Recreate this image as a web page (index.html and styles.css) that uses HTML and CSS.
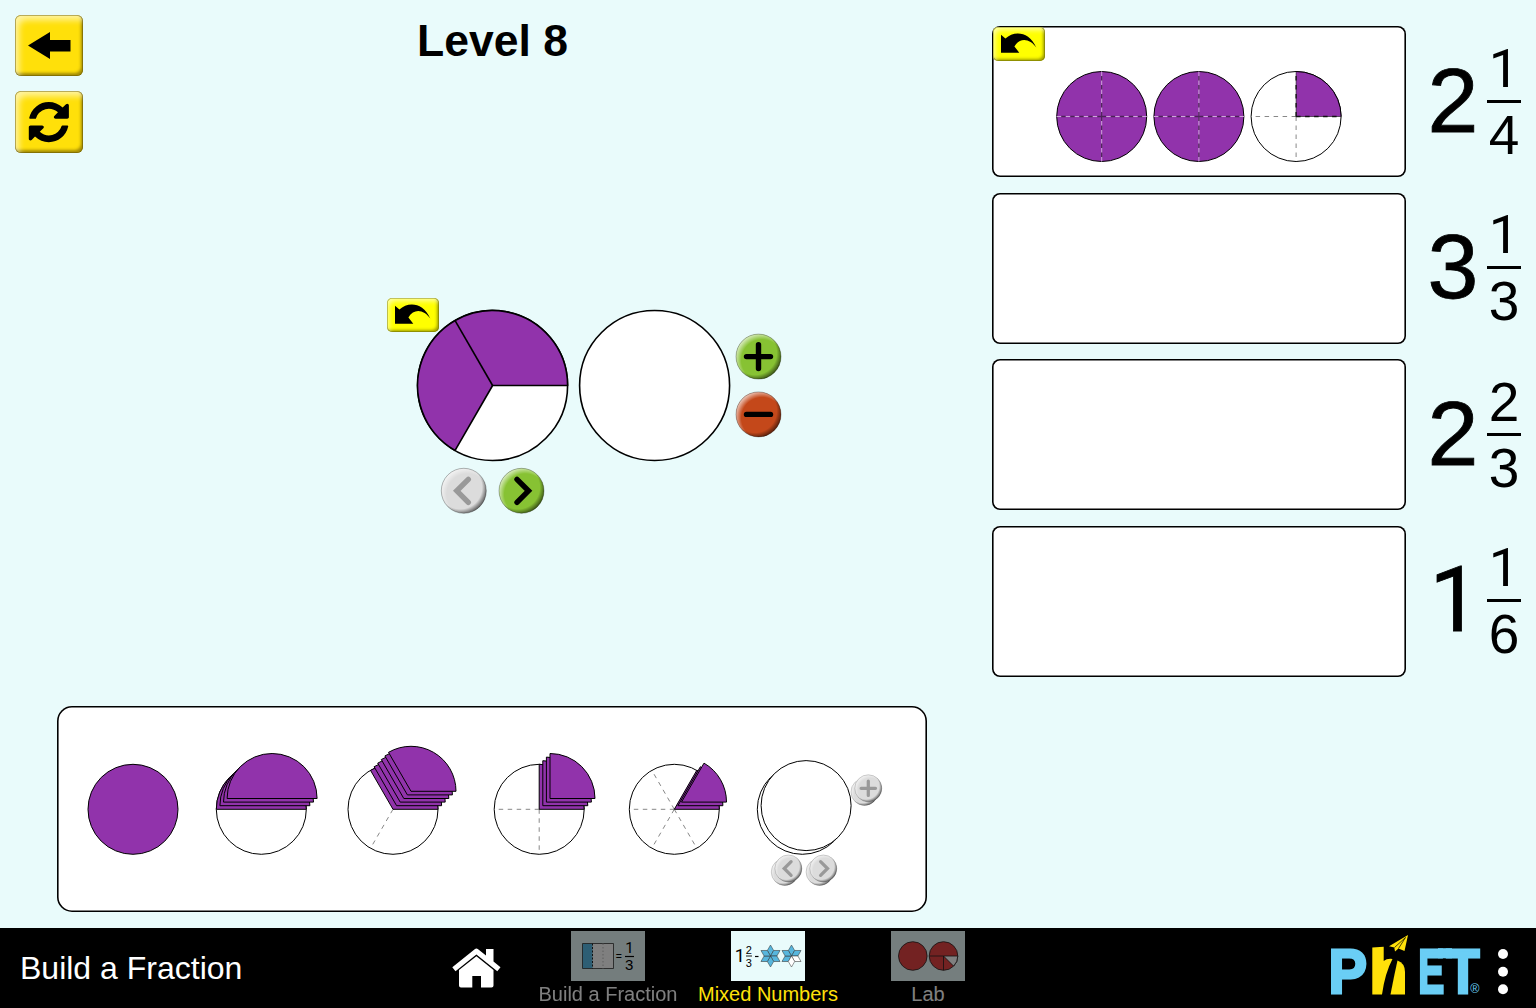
FILE: index.html
```html
<!DOCTYPE html>
<html lang="en">
<head>
<meta charset="utf-8">
<title>Build a Fraction</title>
<link rel="stylesheet" href="styles.css">
</head>
<body>
<svg class="defs" width="0" height="0" aria-hidden="true">
  <defs>
    <radialGradient id="shine" cx=".58" cy=".58" r=".62"><stop offset=".74" stop-color="#fff" stop-opacity="0"/><stop offset="1" stop-color="#fff" stop-opacity=".75"/></radialGradient>
    <radialGradient id="shade" cx=".42" cy=".42" r=".62"><stop offset=".78" stop-color="#000" stop-opacity="0"/><stop offset="1" stop-color="#000" stop-opacity=".62"/></radialGradient>
    <g id="ball"><circle r="22.5"/><circle r="22.5" fill="url(#shine)"/><circle r="22.5" fill="url(#shade)" stroke="#000" stroke-opacity=".4" stroke-width=".7"/></g>
    <path id="chevron" d="M4.5 -11.5L-7 0L4.5 11.5" fill="none" stroke-width="5.4" stroke-linecap="round"/>
    <path id="plus" d="M-12 0H12M0 -12V12" fill="none" stroke-width="5.4" stroke-linecap="round"/>
    <path id="half" d="M-45 0A45 45 0 0 1 45 0Z"/>
    <path id="third" d="M0 0H45A45 45 0 0 0 -22.5 -38.97Z"/>
    <path id="quarter" d="M0 0H45A45 45 0 0 0 0 -45Z"/>
    <path id="sixth" d="M0 0H45A45 45 0 0 0 22.5 -38.97Z"/>
    <path id="undo" d="M8 7.8L12.4 11.6C21 3.5 36 4 43.4 20.8C37 11.5 27 10 21.4 19.5L26.3 25.7H8Z"/>
    <g id="fourths-full"><circle r="45" class="piece"/><path d="M-45 0H45M0 -45V45" stroke="#cda6d9"/><path d="M0 0H41M0 0H-41M0 0V41M0 0V-41" stroke="#4d2159" stroke-width="1.3" stroke-dasharray="4.5 4.5"/></g>
  </defs>
</svg>

<main class="screen">
  <section class="play">
    <header class="top">
      <div class="tools">
        <button class="key" aria-label="Back"><svg width="68" height="61"><path d="M13 30.5L35 17V25H55.5V36.5H35V44Z"/></svg></button>
        <button class="key" aria-label="Refresh"><svg width="68" height="62"><g transform="translate(13.8 7.7) scale(.0261)"><path d="M1511 1056q0 5-1 7-64 268-268 434.500t-478 166.500q-146 0-282.500-55t-243.500-157l-129 129q-19 19-45 19t-45-19-19-45v-448q0-26 19-45t45-19h448q26 0 45 19t19 45-19 45l-137 137q71 66 161 102t187 36q134 0 250-65t186-179q11-17 53-117 8-23 30-23h192q13 0 22.500 9.500t9.500 22.500zm25-800v448q0 26-19 45t-45 19h-448q-26 0-45-19t-19-45 19-45l138-138q-148-137-349-137-134 0-250 65t-186 179q-11 17-53 117-8 23-30 23h-199q-13 0-22.500-9.500t-9.500-22.500v-7q65-268 270-434.500t480-166.500q146 0 284 55.500t245 156.500l130-129q19-19 45-19t45 19 19 45z"/></g></svg></button>
      </div>
      <h1 class="level">Level 8</h1>
    </header>

    <div class="workspace">
      <svg class="build" width="410" height="230" viewBox="382 290 410 230">
        <g class="outline">
          <circle cx="492.600" cy="385.500" r="75"/>
          <circle cx="654.600" cy="385.500" r="75"/>
          <path class="fill" d="M492.600 385.500H567.600A75 75 0 1 0 455.100 450.450Z"/>
          <path d="M492.600 385.500L455.100 320.550"/>
        </g>
        <g transform="translate(758.500 356.600)" class="green"><use href="#ball"/><use href="#plus" class="ink"/></g>
        <g transform="translate(758.500 414.400)" class="rust"><use href="#ball"/><path class="ink" d="M-12 0H12" stroke-width="5.400" stroke-linecap="round"/></g>
        <g transform="translate(463.800 490.800)" class="gray"><use href="#ball"/><use href="#chevron" class="dim"/></g>
        <g transform="translate(521.500 490.800)" class="green"><use href="#ball"/><use href="#chevron" class="ink" transform="scale(-1 1)"/></g>
      </svg>
      <button class="key undo build-undo" aria-label="Undo"><svg width="52" height="34"><use href="#undo"/></svg></button>
    </div>

    <div class="tray">
      <svg width="120" height="150" viewBox="-53 -69.300 120 150"><circle r="45" class="piece"/></svg>
      <svg width="130" height="150" viewBox="-61.300 -69.300 130 150">
        <circle r="45" class="hollow"/>
        <g class="piece"><use href="#half"/><use href="#half" x="3.600" y="-3.600"/><use href="#half" x="7.200" y="-7.200"/><use href="#half" x="10.800" y="-10.800"/></g>
      </svg>
      <svg width="145" height="150" viewBox="-63 -69.300 145 150">
        <circle r="45" class="hollow"/><path class="dash" d="M0 0L-20.500 35.500"/>
        <g class="piece"><use href="#third"/><use href="#third" x="3.600" y="-3.600"/><use href="#third" x="7.200" y="-7.200"/><use href="#third" x="10.800" y="-10.800"/><use href="#third" x="14.400" y="-14.400"/><use href="#third" x="18" y="-18"/></g>
      </svg>
      <svg width="137" height="150" viewBox="-64.200 -69.300 137 150">
        <circle r="45" class="hollow"/><path class="dash" d="M0 0H-41M0 0V41"/>
        <g class="piece"><use href="#quarter"/><use href="#quarter" x="3.600" y="-3.600"/><use href="#quarter" x="7.200" y="-7.200"/><use href="#quarter" x="10.800" y="-10.800"/></g>
      </svg>
      <svg width="130" height="150" viewBox="-62.300 -69.300 130 150">
        <circle r="45" class="hollow"/><path class="dash" d="M0 0H-41M0 0L-20.500 -35.500M0 0L-20.500 35.500M0 0L20.500 35.500"/>
        <g class="piece"><use href="#sixth"/><use href="#sixth" x="3.600" y="-3.600"/><use href="#sixth" x="7.200" y="-7.200"/></g>
      </svg>
      <svg width="158" height="150" viewBox="-60.300 -69.300 158 150">
        <circle r="45" class="hollow"/><circle r="45" cx="3.800" cy="-3.700" class="hollow"/>
        <g class="gray">
          <use href="#ball" transform="translate(62.200 -17.400) scale(.6)"/>
          <g transform="translate(66 -21) scale(.6)"><use href="#ball"/><use href="#plus" class="dim"/></g>
          <use href="#ball" transform="translate(-17.500 62.700) scale(.6)"/>
          <g transform="translate(-13.900 59.200) scale(.6)"><use href="#ball"/><use href="#chevron" class="dim"/></g>
          <use href="#ball" transform="translate(17.300 62.700) scale(.6)"/>
          <g transform="translate(21 59.200) scale(.6)"><use href="#ball"/><use href="#chevron" class="dim" transform="scale(-1 1)"/></g>
        </g>
      </svg>
    </div>
  </section>

  <section class="goals">
    <div class="goal">
      <div class="slot">
        <button class="key undo" aria-label="Undo"><svg width="52" height="34"><use href="#undo"/></svg></button>
        <svg class="answer" width="290" height="94" viewBox="-46.700 -46.500 290 94">
          <use href="#fourths-full"/>
          <use href="#fourths-full" x="97.200"/>
          <g transform="translate(194.400 0)"><circle r="45" class="hollow"/><path class="dash" d="M0 0H-41M0 0V41"/><path class="fill" d="M0 0H45A45 45 0 0 0 0 -45Z"/><path d="M45 0A45 45 0 0 0 0 -45" fill="none" stroke="#000"/><path d="M0 -45V0H45" fill="none" stroke="#000" stroke-opacity=".55"/><path d="M0 0H41M0 0V-41" stroke="#111" stroke-dasharray="4.500 4.500" stroke-width="1.300"/></g>
        </svg>
      </div>
      <div class="mixed"><span class="whole">2</span><span class="frac"><span class="one">1</span><i class="bar"></i><span>4</span></span></div>
    </div>
    <div class="goal">
      <div class="slot"></div>
      <div class="mixed"><span class="whole">3</span><span class="frac"><span class="one">1</span><i class="bar"></i><span>3</span></span></div>
    </div>
    <div class="goal">
      <div class="slot"></div>
      <div class="mixed"><span class="whole">2</span><span class="frac"><span>2</span><i class="bar"></i><span>3</span></span></div>
    </div>
    <div class="goal">
      <div class="slot"></div>
      <div class="mixed"><span class="whole one">1</span><span class="frac"><span class="one">1</span><i class="bar"></i><span>6</span></span></div>
    </div>
  </section>
</main>

<footer class="navbar">
  <div class="sim-title">Build a Fraction</div>
  <svg class="home" width="50" height="42" viewBox="451 947 50 42" fill="#fff">
    <path d="M452.300 967.200L474.700 949.200Q476.400 948 478.100 949.200L486 955.600V949H493.500V961.600L500.500 967.200L497.300 971.200L476.400 954.400L455.500 971.200Z"/>
    <path d="M476.400 956.200L493.500 970V985.500Q493.500 987.500 491.500 987.500H481V976H472.300V987.500H461Q459 987.500 459 985.500V970Z"/>
  </svg>
  <nav class="tabs">
    <a class="tab">
      <svg class="thumb" width="74" height="50">
        <rect x="11.500" y="12.500" width="31" height="25" fill="#fff"/><rect x="11.500" y="12.500" width="10" height="25" fill="#5bbde8"/>
        <path d="M11.500 12.500H42.500V37.500H11.500Z" fill="none" stroke="#333" stroke-width=".8"/><path d="M21.500 12.500V37.500" stroke="#222" stroke-dasharray="2 1.500"/><path d="M32 12.500V37.500" stroke="#bbb" stroke-dasharray="1.500 2"/>
        <text x="44.700" y="29" font-size="10.500">=</text><text class="one-face" x="54.300" y="22.300" font-size="15">1</text><path d="M54 25.500H63" stroke="#000" stroke-width="1.200"/><text x="54" y="38.500" font-size="15">3</text>
      </svg>
      <span>Build a Fraction</span>
    </a>
    <a class="tab active">
      <svg class="thumb" width="74" height="50">
        <defs><path id="petal" d="M0 0L-3.200 -5.500L0 -11L3.200 -5.500Z"/></defs>
        <text class="one-face" x="3.800" y="31" font-size="18">1</text><text x="14.800" y="22.500" font-size="11">2</text><path d="M15 25H21" stroke="#000" stroke-width=".9"/><text x="14.800" y="35.500" font-size="11">3</text>
        <path d="M24 25.500H27.500" stroke="#000" stroke-width="1.200"/>
        <g stroke="#333" stroke-width=".5" fill="#57b6dd">
          <g transform="translate(39.500 25)"><use href="#petal"/><use href="#petal" transform="rotate(60)"/><use href="#petal" transform="rotate(120)"/><use href="#petal" transform="rotate(180)"/><use href="#petal" transform="rotate(240)"/><use href="#petal" transform="rotate(300)"/></g>
          <g transform="translate(60.500 25)"><use href="#petal"/><use href="#petal" transform="rotate(60)"/><use href="#petal" transform="rotate(240)"/><use href="#petal" transform="rotate(300)"/><g fill="#fff"><use href="#petal" transform="rotate(120)"/><use href="#petal" transform="rotate(180)"/></g></g>
        </g>
      </svg>
      <span>Mixed Numbers</span>
    </a>
    <a class="tab">
      <svg class="thumb" width="74" height="50">
        <g fill="#e64545" stroke="#222" stroke-width=".8"><circle cx="21.800" cy="25" r="14.300"/><circle cx="52.500" cy="25" r="14.300"/><path d="M52.500 25H66.800A14.300 14.300 0 0 1 62.600 35.100Z" fill="#fff"/><path d="M38.200 25H52.500V39.300" fill="none"/></g>
      </svg>
      <span>Lab</span>
    </a>
  </nav>
  <svg class="logo" width="158" height="76" viewBox="1328 932 158 76">
    <g class="brand"><text x="1328.500" y="993" textLength="38.500" lengthAdjust="spacingAndGlyphs">P</text><text x="1418.300" y="993" textLength="26" lengthAdjust="spacingAndGlyphs">E</text><text x="1446.500" y="993" textLength="33" lengthAdjust="spacingAndGlyphs">T</text></g>
    <path d="M1438 948.200H1452V958.300H1438Z" fill="#6acef5"/>
    <g fill="#ffe10a">
      <path d="M1372.300 947.500L1383.700 946.800V961Q1387 958.300 1392.500 959Q1385 973 1382 994.500H1372.300Z"/>
      <path d="M1397.500 960.500Q1404.800 963 1405 972V994.500H1390.500Q1394 976 1397.500 960.500Z"/>
      <path d="M1389 946.200L1408 935L1404.500 951L1398.500 948.500L1395 951.500L1394.300 947.500Z"/>
    </g>
    <path d="M1394.500 947.500L1405.500 937.500L1398.500 948.500" fill="none" stroke="#000" stroke-width=".7"/>
    <text class="reg" x="1470.300" y="993">®</text>
  </svg>
  <svg class="menu" width="12" height="48" fill="#fff"><circle cx="6" cy="6" r="5"/><circle cx="6" cy="23.700" r="5"/><circle cx="6" cy="41.200" r="5"/></svg>
</footer>
</body>
</html>
```

FILE: styles.css
```css
* { box-sizing: border-box; }
body {
  margin: 0;
  width: 1536px;
  height: 1008px;
  overflow: hidden;
  background: #e9fbfb;
  color: #000;
  font-family: "Liberation Sans", Arial, sans-serif;
}
svg { display: block; flex: none; }
.defs { position: absolute; }

.screen { display: flex; height: 928px; }
.play { display: flex; flex-direction: column; width: 992px; }
.top { display: flex; height: 160px; padding: 15px 0 0 15px; }
.tools { display: flex; flex-direction: column; gap: 15px; width: 68px; }
.level { margin: 0 0 0 334px; font-size: 44.5px; line-height: 52px; font-weight: bold; white-space: nowrap; }

.key {
  display: block;
  padding: 0;
  border: 0;
  border-radius: 6px;
  background: #ffe00a;
  box-shadow: inset 0 0 0 .8px rgba(90, 75, 0, .55), inset 5px 6px 6px -1px rgba(255, 255, 255, .62), inset -2px -3px 3px rgba(70, 55, 0, .5);
}
.undo {
  width: 52px;
  height: 34px;
  border-radius: 5px;
  background: #ff0;
  box-shadow: inset 0 0 0 .8px rgba(100, 100, 0, .5), inset 3px 4px 5px -1px rgba(255, 255, 255, .65), inset -2px -2px 3px rgba(80, 80, 0, .55);
}

.workspace { position: relative; height: 546px; }
.build { position: absolute; left: 382px; top: 130px; }
.build-undo { position: absolute; left: 387px; top: 138px; }

.outline { fill: #fff; stroke: #000; stroke-width: 1.6; stroke-linejoin: round; }
.fill { fill: #9133ab; }
.piece { fill: #9133ab; stroke: #000; stroke-width: 1; }
.hollow { fill: #fff; stroke: #000; stroke-width: 1; }
.dash { fill: none; stroke: #888; stroke-width: 1; stroke-dasharray: 4.5 4.5; }
.green { fill: #87c233; }
.rust { fill: #c4481a; }
.gray { fill: #dcdcdc; }
.ink { stroke: #000; }
.dim { stroke: #999; }

.tray {
  display: flex;
  width: 870px;
  height: 206px;
  margin-left: 57.3px;
  padding: 34px 0 0 22.700px;
  border-radius: 15px;
  background: #fff;
  box-shadow: inset 0 0 0 1.600px #000;
}

.goals { display: flex; flex-direction: column; gap: 15.5px; padding-top: 26.3px; }
.goal { display: flex; height: 151px; }
.slot {
  display: flex;
  align-items: flex-start;
  width: 414px;
  padding: 1px;
  border-radius: 8px;
  background: #fff;
  box-shadow: inset 0 0 0 1.600px #000;
}
.slot .undo { flex: none; }
.answer { margin: 43px 0 0 10px; }
.mixed { display: flex; align-items: center; }
.whole { width: 52px; margin-left: 21.500px; margin-top: -4px; font-size: 91.500px; line-height: 100px; -webkit-text-stroke: .8px #000; }
.frac { display: flex; flex-direction: column; align-items: center; width: 34px; margin-left: 7.500px; font-size: 55px; line-height: 50px; }
.one, .one-face { font-family: Roboto, "Liberation Sans", sans-serif; }
.frac .one { font-size: 54px; }
.whole.one { margin-top: 0; padding-left: 2px; font-size: 90px; }
.bar { width: 34px; height: 3px; margin: 6px 0 7px; background: #000; }

.navbar { display: flex; height: 80px; background: #000; }
.sim-title { width: 451px; padding: 22px 0 0 20px; color: #fff; font-size: 32px; line-height: 36px; white-space: nowrap; }
.home { margin-top: 19px; }
.tabs { display: flex; margin-left: 27px; }
.tab { display: flex; flex-direction: column; align-items: center; width: 160px; padding-top: 3px; color: #fff; font-size: 20px; line-height: 24px; opacity: .5; white-space: nowrap; }
.tab.active { color: #ffe10a; opacity: 1; }
.thumb { background: #e9fbfb; margin-bottom: 1px; }
.logo { margin: 4px 0 0 320px; }
.brand { fill: #6acef5; stroke: #6acef5; stroke-width: 3; font-size: 63.500px; font-weight: bold; }
.reg { fill: #6acef5; font-size: 12.500px; }
.menu { margin: 20px 0 0 11px; }
```
